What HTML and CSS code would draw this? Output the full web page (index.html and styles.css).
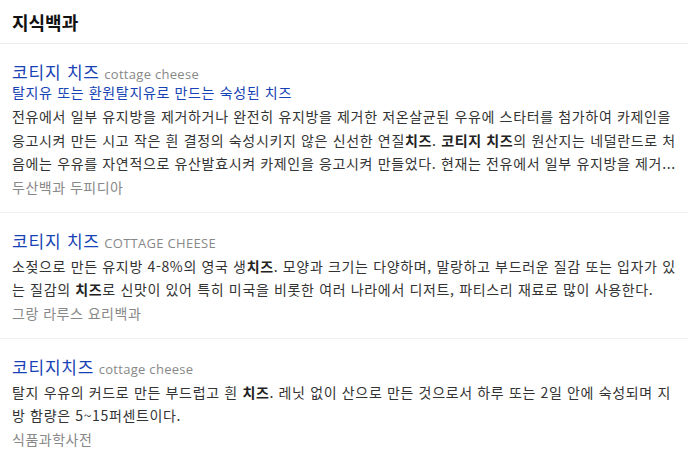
FILE: index.html
```html
<!DOCTYPE html>
<html lang="ko">
<head>
<meta charset="utf-8">
<title>지식백과</title>
<link rel="stylesheet" href="styles.css">
</head>
<body>
<div class="panel">
  <h2 class="panel-title">지식백과</h2>
  <div class="entry">
    <div class="entry-head"><a class="entry-title" href="#">코티지 치즈</a> <span class="entry-en">cottage cheese</span></div>
    <div class="entry-sub">탈지유 또는 환원탈지유로 만드는 숙성된 치즈</div>
    <p class="entry-desc clamp">전유에서 일부 유지방을 제거하거나 완전히 유지방을 제거한 저온살균된 우유에 스타터를 첨가하여 카제인을 응고시켜 만든 시고 작은 흰 결정의 숙성시키지 않은 신선한 연질<b>치즈</b>. <b>코티지 치즈</b>의 원산지는 네덜란드로 처음에는 우유를 자연적으로 유산발효시켜 카제인을 응고시켜 만들었다. 현재는 전유에서 일부 유지방을 제거...</p>
    <div class="entry-src">두산백과 두피디아</div>
  </div>
  <div class="entry">
    <div class="entry-head"><a class="entry-title" href="#">코티지 치즈</a> <span class="entry-en">COTTAGE CHEESE</span></div>
    <p class="entry-desc">소젖으로 만든 유지방 4-8%의 영국 생<b>치즈</b>. 모양과 크기는 다양하며, 말랑하고 부드러운 질감 또는 입자가 있는 질감의 <b>치즈</b>로 신맛이 있어 특히 미국을 비롯한 여러 나라에서 디저트, 파티스리 재료로 많이 사용한다.</p>
    <div class="entry-src">그랑 라루스 요리백과</div>
  </div>
  <div class="entry">
    <div class="entry-head"><a class="entry-title" href="#">코티지치즈</a> <span class="entry-en">cottage cheese</span></div>
    <p class="entry-desc">탈지 우유의 커드로 만든 부드럽고 흰 <b>치즈</b>. 레닛 없이 산으로 만든 것으로서 하루 또는 2일 안에 숙성되며 지방 함량은 5~15퍼센트이다.</p>
    <div class="entry-src">식품과학사전</div>
  </div>
</div>
</body>
</html>
```

FILE: styles.css
```css
html, body {
  margin: 0;
  padding: 0;
  background: #fff;
}
body {
  font-family: "Noto Sans CJK KR", "Noto Sans", sans-serif;
  color: #333;
}
.panel {
  width: 688px;
}
.panel-title {
  margin: 0;
  height: 44px;
  padding: 0 12px;
  box-sizing: border-box;
  display: flex;
  align-items: center;
  font-size: 18px;
  font-weight: 700;
  color: #111;
  border-bottom: 1px solid #ebebeb;
}
.entry {
  padding: 18px 12px 15px;
  border-bottom: 1px solid #eef0f3;
}
.entry:last-child {
  border-bottom: none;
}
.entry-head {
  line-height: 20px;
  height: 20px;
  white-space: nowrap;
}
.entry-title {
  font-size: 17px;
  letter-spacing: 0.8px;
  color: #1642b5;
  text-decoration: none;
}
.entry-en {
  font-family: "Open Sans", "Noto Sans", sans-serif;
  font-size: 13px;
  letter-spacing: 0.3px;
  color: #888;
}
.entry-sub {
  font-size: 14px;
  letter-spacing: 0.65px;
  line-height: 16px;
  color: #1642b5;
  margin-top: 2px;
  margin-bottom: 5px;
}
.entry-desc {
  margin: 4px 0 0;
  font-size: 14px;
  letter-spacing: 0.65px;
  line-height: 23.5px;
  color: #333;
}
.entry-desc b {
  font-weight: 700;
  color: #222;
}
.clamp {
  display: -webkit-box;
  -webkit-box-orient: vertical;
  -webkit-line-clamp: 3;
  overflow: hidden;
}
.entry-src {
  font-size: 14px;
  letter-spacing: 0.5px;
  line-height: 20px;
  margin-top: 1px;
  color: #888;
}
```
